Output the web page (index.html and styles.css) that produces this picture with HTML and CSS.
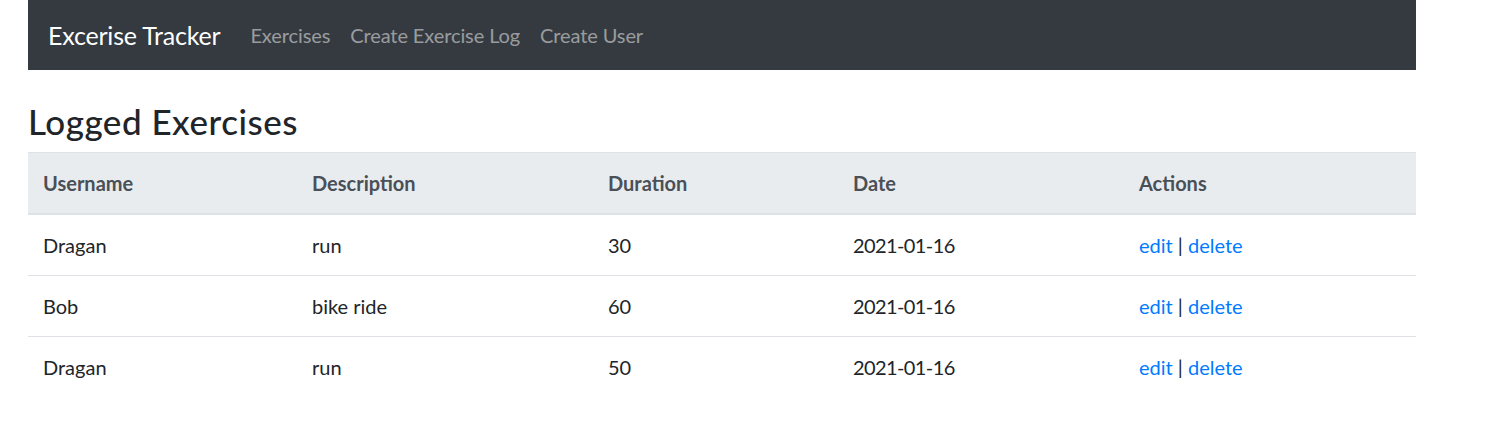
FILE: index.html
```html
<!DOCTYPE html>
<html lang="en">
<head>
<meta charset="utf-8">
<title>Excerise Tracker</title>
<link rel="stylesheet" href="styles.css">
</head>
<body>
<div class="container">
  <nav class="navbar">
    <a class="brand" href="#">Excerise Tracker</a>
    <ul class="nav">
      <li><a class="nav-link" href="#">Exercises</a></li>
      <li><a class="nav-link" href="#">Create Exercise Log</a></li>
      <li><a class="nav-link" href="#">Create User</a></li>
    </ul>
  </nav>
  <div class="spacer"></div>
  <h3 class="title">Logged Exercises</h3>
  <table class="table">
    <thead>
      <tr>
        <th class="c-user">Username</th>
        <th class="c-desc">Description</th>
        <th class="c-dur">Duration</th>
        <th class="c-date">Date</th>
        <th class="c-act">Actions</th>
      </tr>
    </thead>
    <tbody>
      <tr>
        <td>Dragan</td><td>run</td><td>30</td><td class="date">2021-01-16</td>
        <td><a href="#">edit</a> | <a href="#">delete</a></td>
      </tr>
      <tr>
        <td>Bob</td><td>bike ride</td><td>60</td><td class="date">2021-01-16</td>
        <td><a href="#">edit</a> | <a href="#">delete</a></td>
      </tr>
      <tr>
        <td>Dragan</td><td>run</td><td>50</td><td class="date">2021-01-16</td>
        <td><a href="#">edit</a> | <a href="#">delete</a></td>
      </tr>
    </tbody>
  </table>
</div>
</body>
</html>
```
FILE: styles.css
```css
* { box-sizing: border-box; }
html, body { margin: 0; padding: 0; background: #fff; }
body {
  font-family: "Lato", "Noto Sans", sans-serif;
  font-size: 20px;
  line-height: 1.5;
  color: #212529;
}
.container {
  margin-left: 28px;
  width: 1388px;
}
.navbar {
  display: flex;
  align-items: center;
  height: 70px;
  padding: 10px 20px;
  background: #343a40;
}
.brand {
  font-size: 25px;
  line-height: 37.5px;
  padding: 7px 0 5px;
  margin-right: 20px;
  color: #fff;
  text-decoration: none;
  letter-spacing: -0.2px;
}
.nav {
  display: flex;
  list-style: none;
  margin: 0;
  padding: 0;
}
.nav-link {
  display: block;
  padding: 10px 10px;
  color: rgba(255,255,255,.5);
  text-decoration: none;
  letter-spacing: -0.1px;
}
.spacer { height: 30px; }
.title {
  margin: 0 0 10px;
  font-size: 35px;
  font-weight: 500;
  line-height: 42px;
  color: #212529;
  letter-spacing: 0.5px;
}
.table {
  width: 100%;
  border-collapse: collapse;
}
.table th, .table td {
  padding: 15px;
  text-align: left;
  vertical-align: top;
  border-top: 1.25px solid #dee2e6;
}
.table thead th {
  background: #e9ecef;
  color: #495057;
  font-weight: 700;
  border-bottom: 2.5px solid #dee2e6;
}
.c-user { width: 269px; }
.c-desc { width: 296px; }
.c-dur { width: 245px; }
.c-date { width: 286px; }
.date { letter-spacing: -0.6px; }
.table a { color: #007bff; text-decoration: none; }
```
